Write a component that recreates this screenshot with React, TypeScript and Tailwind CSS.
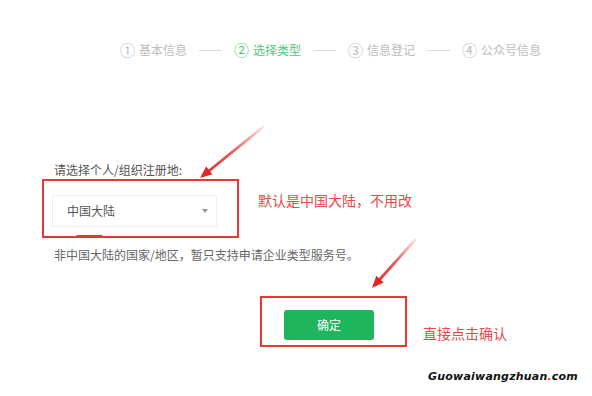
import React from "react";

const steps = [
  { n: "①", label: "基本信息", active: false },
  { n: "②", label: "选择类型", active: true },
  { n: "③", label: "信息登记", active: false },
  { n: "④", label: "公众号信息", active: false },
];

function Stepper() {
  return (
    <div className="flex items-center pt-[42px] pl-[120px] text-[12px] leading-[16px]">
      {steps.map((s, i) => (
        <React.Fragment key={s.n}>
          {i > 0 && <div className="mx-[12px] w-[23px] h-px bg-[#dcdcdc]" />}
          <div
            className={
              "flex items-center gap-[4px] " +
              (s.active ? "text-[#4fc77f]" : "text-[#bdbdbd]")
            }
          >
            <span className="text-[15px] leading-[16px]">{s.n}</span>
            <span>{s.label}</span>
          </div>
        </React.Fragment>
      ))}
    </div>
  );
}

// red annotation arrows drawn on top of the page
function Arrows() {
  return (
    <svg
      className="absolute left-0 top-0 pointer-events-none"
      width="592"
      height="396"
      viewBox="0 0 592 396"
    >
      <defs>
        <linearGradient id="a1" x1="263" y1="127" x2="200" y2="178" gradientUnits="userSpaceOnUse">
          <stop offset="0" stopColor="#e53935" stopOpacity="0.15" />
          <stop offset="0.5" stopColor="#e53935" stopOpacity="0.85" />
          <stop offset="1" stopColor="#e02828" />
        </linearGradient>
        <linearGradient id="a2" x1="415" y1="240" x2="372" y2="288" gradientUnits="userSpaceOnUse">
          <stop offset="0" stopColor="#e53935" stopOpacity="0.15" />
          <stop offset="0.5" stopColor="#e53935" stopOpacity="0.85" />
          <stop offset="1" stopColor="#e02828" />
        </linearGradient>
      </defs>
      <line x1="263" y1="127" x2="207" y2="172.5" stroke="url(#a1)" strokeWidth="2.8" strokeLinecap="round" />
      <polygon points="200,178 212.5,174.3 206.2,166.5" fill="#e02828" />
      <line x1="415" y1="240" x2="377" y2="282.5" stroke="url(#a2)" strokeWidth="2.8" strokeLinecap="round" />
      <polygon points="372,288 383.7,282.4 376.3,275.8" fill="#e02828" />
    </svg>
  );
}

export default function App() {
  return (
    <div className="relative w-[592px] h-[396px] overflow-hidden bg-white font-['Noto_Sans_CJK_SC',sans-serif]">
      <Stepper />

      <div className="pl-[54px]">
        <p className="mt-[104px] text-[12px] leading-[16px] text-[#555]">请选择个人/组织注册地:</p>

        <div className="flex items-start -ml-[12px] mt-[1px]">
          <div className="relative w-[197px] border-2 border-[#e53935] pt-[14px] pb-[9px] pl-[8px] pr-[20px]">
            <div className="flex h-[32px] w-[165px] items-center justify-between border border-[#efefef] pl-[14px] pr-[8px]">
              <span className="text-[12px] text-[#555]">中国大陆</span>
              <span className="h-0 w-0 border-x-[3px] border-t-[4px] border-x-transparent border-t-[#999]" />
            </div>
            <div className="absolute left-[32px] -bottom-[2px] h-[3px] w-[27px] rounded-full bg-[#e53935]" />
          </div>
          <p className="ml-[19px] mt-[11px] text-[14px] leading-[20px] text-[#e84848]">默认是中国大陆，不用改</p>
        </div>

        <p className="mt-[9px] text-[12px] leading-[16px] text-[#666]">
          非中国大陆的国家/地区，暂只支持申请企业类型服务号。
        </p>

        <div className="flex items-start ml-[206px] mt-[33px]">
          <div className="w-[147px] border-2 border-[#e53935] pt-[12px] pb-[5px] pl-[22px] pr-[31px]">
            <button className="flex h-[30px] w-[90px] items-center justify-center rounded-[3px] bg-[#1fb55c] text-[12px] text-white">
              确定
            </button>
          </div>
          <p className="ml-[16px] mt-[27px] text-[14px] leading-[20px] text-[#e84848]">直接点击确认</p>
        </div>
      </div>

      <div className="absolute right-[14px] top-[370px] text-[11px] font-bold italic leading-[14px] tracking-[0.2px] text-[#111] font-['DejaVu_Sans',sans-serif]">
        Guowaiwangzhuan<span className="text-[#e53935]">.</span>com
      </div>

      <Arrows />
    </div>
  );
}
